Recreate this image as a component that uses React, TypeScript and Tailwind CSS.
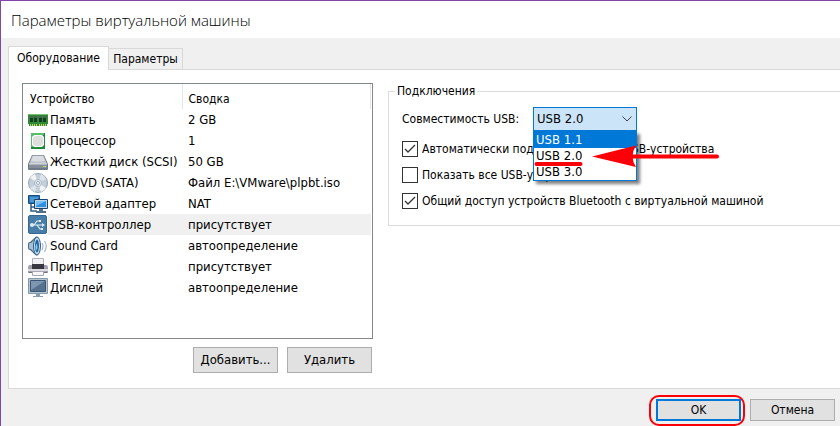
import type { ReactNode } from "react";

const icons: Record<string, ReactNode> = {
  memory: (
    <>
      <path d="M0 4h20v10h-1v2H1v-2H0z" fill="#2f8a35" />
      <path d="M0 4h20v1H0z" fill="#74bd6c" />
      <path d="M2 6h3v6H2zM6 6h3v6H6zM11 6h3v6h-3zM15 6h3v6h-3z" fill="#173b22" />
      <path d="M2 6h3v2H2zM6 6h3v2H6zM11 6h3v2h-3zM15 6h3v2h-3z" fill="#4b6355" />
      <path d="M2 14h1v2H2zM4 14h1v2H4zM6 14h1v2H6zM8 14h1v2H8zM11 14h1v2h-1zM13 14h1v2h-1zM15 14h1v2h-1zM17 14h1v2h-1z" fill="#c9d46a" />
    </>
  ),
  cpu: (
    <>
      <path d="M3 2h14v16H3z" fill="#1f8a3a" />
      <path d="M3 2h13v2H5v12H3z" fill="#56bd6b" />
      <path d="M6 4h8l2 2v8l-2 2H6l-2-2V6z" fill="#fff" />
      <path d="M7 5h6l2 2v6l-2 2H7l-2-2V7z" fill="#dcdfdc" />
    </>
  ),
  disk: (
    <>
      <path d="M4 3h12l4 9v5q0 1-1 1H1q-1 0-1-1v-5z" fill="#707988" />
      <path d="M4.500 3.500h11L19 12H1z" fill="#bcc2ca" />
      <path d="M5 4h10l2 5q-7 1-14 0z" fill="#d9dce1" />
      <path d="M1 12.500h18V16H1z" fill="#858e9a" />
      <path d="M1 12h18" stroke="#e5e8ec" />
      <path d="M15 14h3v1h-3z" fill="#a8e56c" />
    </>
  ),
  disc: (
    <>
      <circle cx="10" cy="10" r="9.500" fill="#c4ced8" stroke="#94a5b5" />
      <path d="M10 10 2 5a9 9 0 0 1 5-4zM10 10l8 5a9 9 0 0 1-5 4z" fill="#f2f5f8" />
      <path d="M10 10 13 1a9 9 0 0 1 5 5zM10 10 2 15a9 9 0 0 0 5 4z" fill="#dce4eb" />
      <circle cx="10" cy="10" r="3.500" fill="#e5ebf0" stroke="#a9b7c4" />
      <circle cx="10" cy="10" r="1.500" fill="#fff" stroke="#9dabb8" />
    </>
  ),
  network: (
    <>
      <path d="M.5 1.500h11v8H.5z" fill="#2775b8" stroke="#165082" />
      <path d="M2 3h8v5H2z" fill="#4f97cf" />
      <path d="M3 10v7h6M3 13h3" stroke="#315e88" fill="none" strokeWidth="1.500" />
      <path d="M6.500 5.500h13v9h-13z" fill="#c4d6e5" stroke="#174573" />
      <path d="M8 7h10v6H8z" fill="#2c8fe0" />
      <path d="M8 7h10L8 12z" fill="#74c0f7" />
      <path d="M11 15h4v2h3v2H8v-2h3z" fill="#52708c" />
    </>
  ),
  usb: (
    <>
      <rect x=".5" y=".5" width="18" height="18" rx="1.500" fill="#487da7" stroke="#326893" />
      <path d="M4 10h11M6 10l3-4h2M9 10l3 4h2" stroke="#e1ebf3" strokeWidth="1.200" fill="none" />
      <circle cx="4" cy="10" r="2" fill="#e1ebf3" />
      <path d="m14 8 3 2-3 2zM11 5h2v2h-2zM13 13h2v2h-2z" fill="#e1ebf3" />
    </>
  ),
  sound: (
    <>
      <path d="M0 8q0-2 2-2l6-5.500q4 0 4 9.500t-4 9.500L2 14q-2 0-2-2z" fill="#4a6c8c" />
      <path d="M1 8q0-1 2-1l3-3v12l-3-3q-2 0-2-1z" fill="#a9c0d3" />
      <ellipse cx="9" cy="10" rx="3.500" ry="9" fill="#c4dcec" stroke="#355f87" />
      <ellipse cx="9" cy="10" rx="2" ry="6.500" fill="#1f67a8" />
      <ellipse cx="8.500" cy="11" rx="1" ry="3" fill="#8cc8ee" />
      <path d="M14 7q2 3 0 7M16.500 5q3.500 5 0 11" stroke="#a3b6c8" fill="none" strokeWidth="1.200" />
    </>
  ),
  printer: (
    <>
      <path d="M4.500 1.500h11v8h-11z" fill="#f2f2f5" stroke="#b4b3bd" />
      <path d="M1 8h18l1 2v6H0v-6z" fill="#a3a0b0" />
      <path d="M4 7h12v5H4z" fill="#39373f" />
      <path d="M0 12h20v2H0z" fill="#dddce3" />
      <path d="M1 15h18v1H1z" fill="#74727e" />
      <path d="M4.500 14.500h11v4h-11z" fill="#f7f7f8" stroke="#a8a7b2" />
    </>
  ),
  display: (
    <>
      <path d="M.5.500h19v15H.5z" fill="#b9c6d0" stroke="#8398a9" />
      <path d="M2.500 2.500h15v11h-15z" fill="#55718e" stroke="#3a5876" />
      <path d="M3 3h14L3 12z" fill="#7d97b0" />
      <path d="M8 16h4v2h3v1H5v-1h3z" fill="#8b9daa" />
    </>
  ),
};

const devices = [
  ["memory", "Память", "2 GB"],
  ["cpu", "Процессор", "1"],
  ["disk", "Жесткий диск (SCSI)", "50 GB"],
  ["disc", "CD/DVD (SATA)", "Файл E:\\VMware\\plpbt.iso"],
  ["network", "Сетевой адаптер", "NAT"],
  ["usb", "USB-контроллер", "присутствует"],
  ["sound", "Sound Card", "автоопределение"],
  ["printer", "Принтер", "присутствует"],
  ["display", "Дисплей", "автоопределение"],
];

function DeviceTable() {
  return (
    <div className="h-64 border border-[#828790] bg-white pl-[5px] pr-px">
      <table className="w-full table-fixed border-collapse text-left">
        <colgroup>
          <col className="w-[154px]" />
          <col />
        </colgroup>
        <thead>
          <tr className="h-[25px]">
            <th className="border-r border-[#e5e5e5] p-0 pl-0.5 pt-1 font-normal">Устройство</th>
            <th className="border-r border-[#e5e5e5] p-0 pl-1.5 pt-1 font-normal">Сводка</th>
          </tr>
        </thead>
        <tbody className="text-[13px]">
          {devices.map(([icon, name, summary]) => {
            const fill = icon === "usb" ? "bg-[#f0f0f0]" : "";
            return (
              <tr key={icon} className="h-[21px]">
                <td className="p-0">
                  <div className="flex h-[21px] items-center">
                    <svg viewBox="0 0 20 20" className="size-5 shrink-0" aria-hidden="true">
                      {icons[icon]}
                    </svg>
                    <span className={`flex h-full flex-1 items-center whitespace-nowrap pl-0.5 ${fill}`}>{name}</span>
                  </div>
                </td>
                <td className={`whitespace-nowrap p-0 pl-1.5 ${fill}`}>{summary}</td>
              </tr>
            );
          })}
        </tbody>
      </table>
    </div>
  );
}

function Check({ label, checked = false }: { label: string; checked?: boolean }) {
  return (
    <label className="flex h-[26px] items-center gap-1 whitespace-nowrap">
      <span className="grid shrink-0">
        <input
          type="checkbox"
          defaultChecked={checked}
          className="peer col-start-1 row-start-1 size-4 appearance-none border border-[#333] bg-white"
        />
        <svg viewBox="0 0 16 16" className="pointer-events-none invisible col-start-1 row-start-1 size-4 peer-checked:visible" aria-hidden="true">
          <path d="m3 8 3 3 7-7" fill="none" stroke="#333" strokeWidth="1.300" />
        </svg>
      </span>
      {label}
    </label>
  );
}

function UsbSelect() {
  return (
    <div className="relative w-[104px] text-[13px]">
      <select
        id="usb"
        defaultValue="USB 2.0"
        className="block h-6 w-full appearance-none border border-[#0078d7] bg-[#cce4f7] pl-[3px] text-black outline-none"
      >
        <option>USB 1.1</option>
        <option>USB 2.0</option>
        <option>USB 3.0</option>
      </select>
      <svg viewBox="0 0 10 6" className="pointer-events-none absolute right-[5px] top-[9px] h-1.5 w-2.5" aria-hidden="true">
        <path d="m.5.5 4.500 4.500L9.500.5" fill="none" stroke="#444" />
      </svg>
      <ul className="absolute left-0 top-6 z-10 w-full border border-t-0 border-[#0078d7] bg-white leading-4 shadow-[3px_3px_3px_rgba(0,0,0,0.5)]">
        <li className="bg-[#0078d7] pl-0.5 pt-px text-white">USB 1.1</li>
        <li className="pl-0.5">USB 2.0</li>
        <li className="pl-0.5">USB 3.0</li>
      </ul>
      <svg viewBox="0 0 188 34" className="pointer-events-none absolute left-0 top-8 z-20 h-[34px] w-[188px] max-w-none" aria-hidden="true">
        <path d="M3.500 25h44" stroke="#fb0007" strokeWidth="4" strokeLinecap="round" />
        <path d="M59 17.500 103 6.500q-7 11 0 21.500z" fill="#fb0007" />
        <path d="M98 17.500h86" stroke="#fb0007" strokeWidth="4" strokeLinecap="round" />
      </svg>
    </div>
  );
}

const button = "h-[26px] w-[85px] border border-[#adadad] bg-[#e1e1e1] text-[13px]";

export default function App() {
  return (
    <main className="flex min-h-screen flex-col overflow-hidden border-l border-t border-[#8047a8] bg-[#f0f0f0] font-['DejaVu_Sans_Condensed','DejaVu_Sans',sans-serif] text-xs leading-4 text-black">
      <h1 className="h-[37px] bg-white pl-2.5 pt-2 font-['Open_Sans',sans-serif] text-[15px] font-light leading-[22px]">Параметры виртуальной машины</h1>
      <div role="tablist" className="mt-2 flex items-end pl-[7px]">
        <button role="tab" aria-selected="true" className="z-10 -mb-px h-6 w-[101px] border border-b-0 border-[#d9d9d9] bg-white pb-0.5">Оборудование</button>
        <button role="tab" aria-selected="false" className="h-[21px] w-[74px] whitespace-nowrap border border-b-0 border-l-0 border-[#d9d9d9]">Параметры</button>
      </div>
      <section className="ml-[7px] flex items-start gap-[15px] border border-r-0 border-[#d9d9d9] bg-white pb-[15px] pl-[13px] pt-[13px]">
        <div className="w-[351px] shrink-0">
          <DeviceTable />
          <div className="mt-2 flex justify-end gap-[9px] pr-px">
            <button className={button}>Добавить...</button>
            <button className={button}>Удалить</button>
          </div>
        </div>
        <fieldset className="min-w-0 flex-1 border border-r-0 border-[#dcdcdc] pb-[11px] pl-[13px]">
          <legend className="-ml-[7px] px-0.5">Подключения</legend>
          <div className="mb-[5px] mt-2 flex items-center">
            <label htmlFor="usb" className="w-[131px] whitespace-nowrap">Совместимость USB:</label>
            <UsbSelect />
          </div>
          <Check checked label="Автоматически подключать новые USB-устройства" />
          <Check label="Показать все USB-устройства ввода" />
          <Check checked label="Общий доступ устройств Bluetooth с виртуальной машиной" />
        </fieldset>
      </section>
      <footer className="flex justify-end gap-[5px] pr-[5px] pt-1.5">
        <div className="-mb-2 h-[31px] w-24 rounded-[10px] border-2 border-[#fb0007] pl-[5px] pr-0.5 pt-0.5">
          <button className="h-[22px] w-full border-2 border-[#0078d7] bg-[#e1e1e1]">OK</button>
        </div>
        <button className="mt-1 h-[22px] w-[85px] border border-[#adadad] bg-[#e1e1e1]">Отмена</button>
      </footer>
    </main>
  );
}
